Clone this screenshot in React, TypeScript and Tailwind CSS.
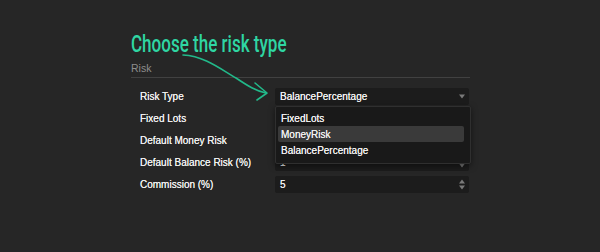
import React from "react";

// ─── Types ────────────────────────────────────────────────────────────────────

type Row = {
  label: string;
  value: string;
  kind: "select" | "number";
};

// values that sit fully under the open list are left empty (not visible)
const rows: Row[] = [
  { label: "Risk Type", value: "BalancePercentage", kind: "select" },
  { label: "Fixed Lots", value: "", kind: "number" },
  { label: "Default Money Risk", value: "", kind: "number" },
  { label: "Default Balance Risk (%)", value: "1", kind: "number" },
  { label: "Commission (%)", value: "5", kind: "number" },
];

const options = ["FixedLots", "MoneyRisk", "BalancePercentage"];

// ─── Small pieces ─────────────────────────────────────────────────────────────

const Caret = () => (
  <svg width="6" height="5" viewBox="0 0 6 5" className="shrink-0">
    <path d="M0 0.5 L6 0.5 L3 4.5 Z" fill="#7a7a7a" />
  </svg>
);

const Spinner = () => (
  <svg width="6" height="11" viewBox="0 0 6 11" className="shrink-0">
    <path d="M0 4.5 L6 4.5 L3 0.5 Z" fill="#7a7a7a" />
    <path d="M0 6.5 L6 6.5 L3 10.5 Z" fill="#7a7a7a" />
  </svg>
);

// ─── Component ────────────────────────────────────────────────────────────────

export default function App() {
  return (
    <div className="relative h-[252px] w-[600px] overflow-hidden bg-[#262626] font-['Liberation_Sans',Arial,sans-serif] [text-shadow:0_0_0.4px_currentColor]">
      <div className="flex w-[470px] flex-col pl-[131px] pt-[31px]">
        {/* ── Callout title ── */}
        <div className="h-[30px] origin-left scale-x-[0.71] whitespace-nowrap font-['Roboto',sans-serif] text-[24px] font-medium leading-[26px] text-[#2fd6a3] [text-shadow:none]">
          Choose the risk type
        </div>

        {/* ── Section header ── */}
        <div className="border-b border-[#414141] pb-[2px] text-[10.5px] leading-[14px] text-[#8d8d8d] [text-shadow:none]">
          Risk
        </div>

        {/* ── Settings rows ── */}
        <div className="mt-[10px] flex flex-col gap-[5px] pl-[9px]">
          {rows.map((row) => (
            <div key={row.label} className="flex h-[17px] items-center">
              <span className="w-[135px] text-[10px] text-[#f0f0f0]">{row.label}</span>
              <div className="relative h-[17px] w-[194px]">
                <div className="flex h-full items-center justify-between rounded-[2px] bg-[#1c1c1c] pl-[5px] pr-[4px]">
                  <span className="text-[10px] text-[#f0f0f0]">{row.value}</span>
                  {row.kind === "select" ? <Caret /> : <Spinner />}
                </div>

                {/* Open dropdown list */}
                {row.kind === "select" && (
                  <div className="absolute left-0 top-[18px] z-10 w-[196px] rounded-[2px] border border-[#2f2f2f] bg-[#191919] px-[2px] pb-[5px] pt-[3px] shadow-[0_2px_6px_rgba(0,0,0,0.5)]">
                    {options.map((opt) => (
                      <div
                        key={opt}
                        className={[
                          "flex h-[16px] items-center rounded-[2px] pl-[3px] text-[10px] text-[#f0f0f0]",
                          opt === "MoneyRisk" ? "w-[186px] bg-[#3a3a3a]" : "",
                        ].join(" ")}
                      >
                        {opt}
                      </div>
                    ))}
                  </div>
                )}
              </div>
            </div>
          ))}
        </div>
      </div>

      {/* ── Hand-drawn arrow pointing at the select ── */}
      <svg
        className="pointer-events-none absolute left-0 top-0"
        width="600"
        height="252"
        viewBox="0 0 600 252"
      >
        <g fill="none" stroke="#22b98a" strokeWidth="1.6" strokeLinecap="round" strokeLinejoin="round">
          <path d="M183 55 C 205 56 222 70 236 78 C 248 86 256 91 266 93" />
          <path d="M255 83 L 267 93 L 257 100" />
        </g>
      </svg>
    </div>
  );
}
